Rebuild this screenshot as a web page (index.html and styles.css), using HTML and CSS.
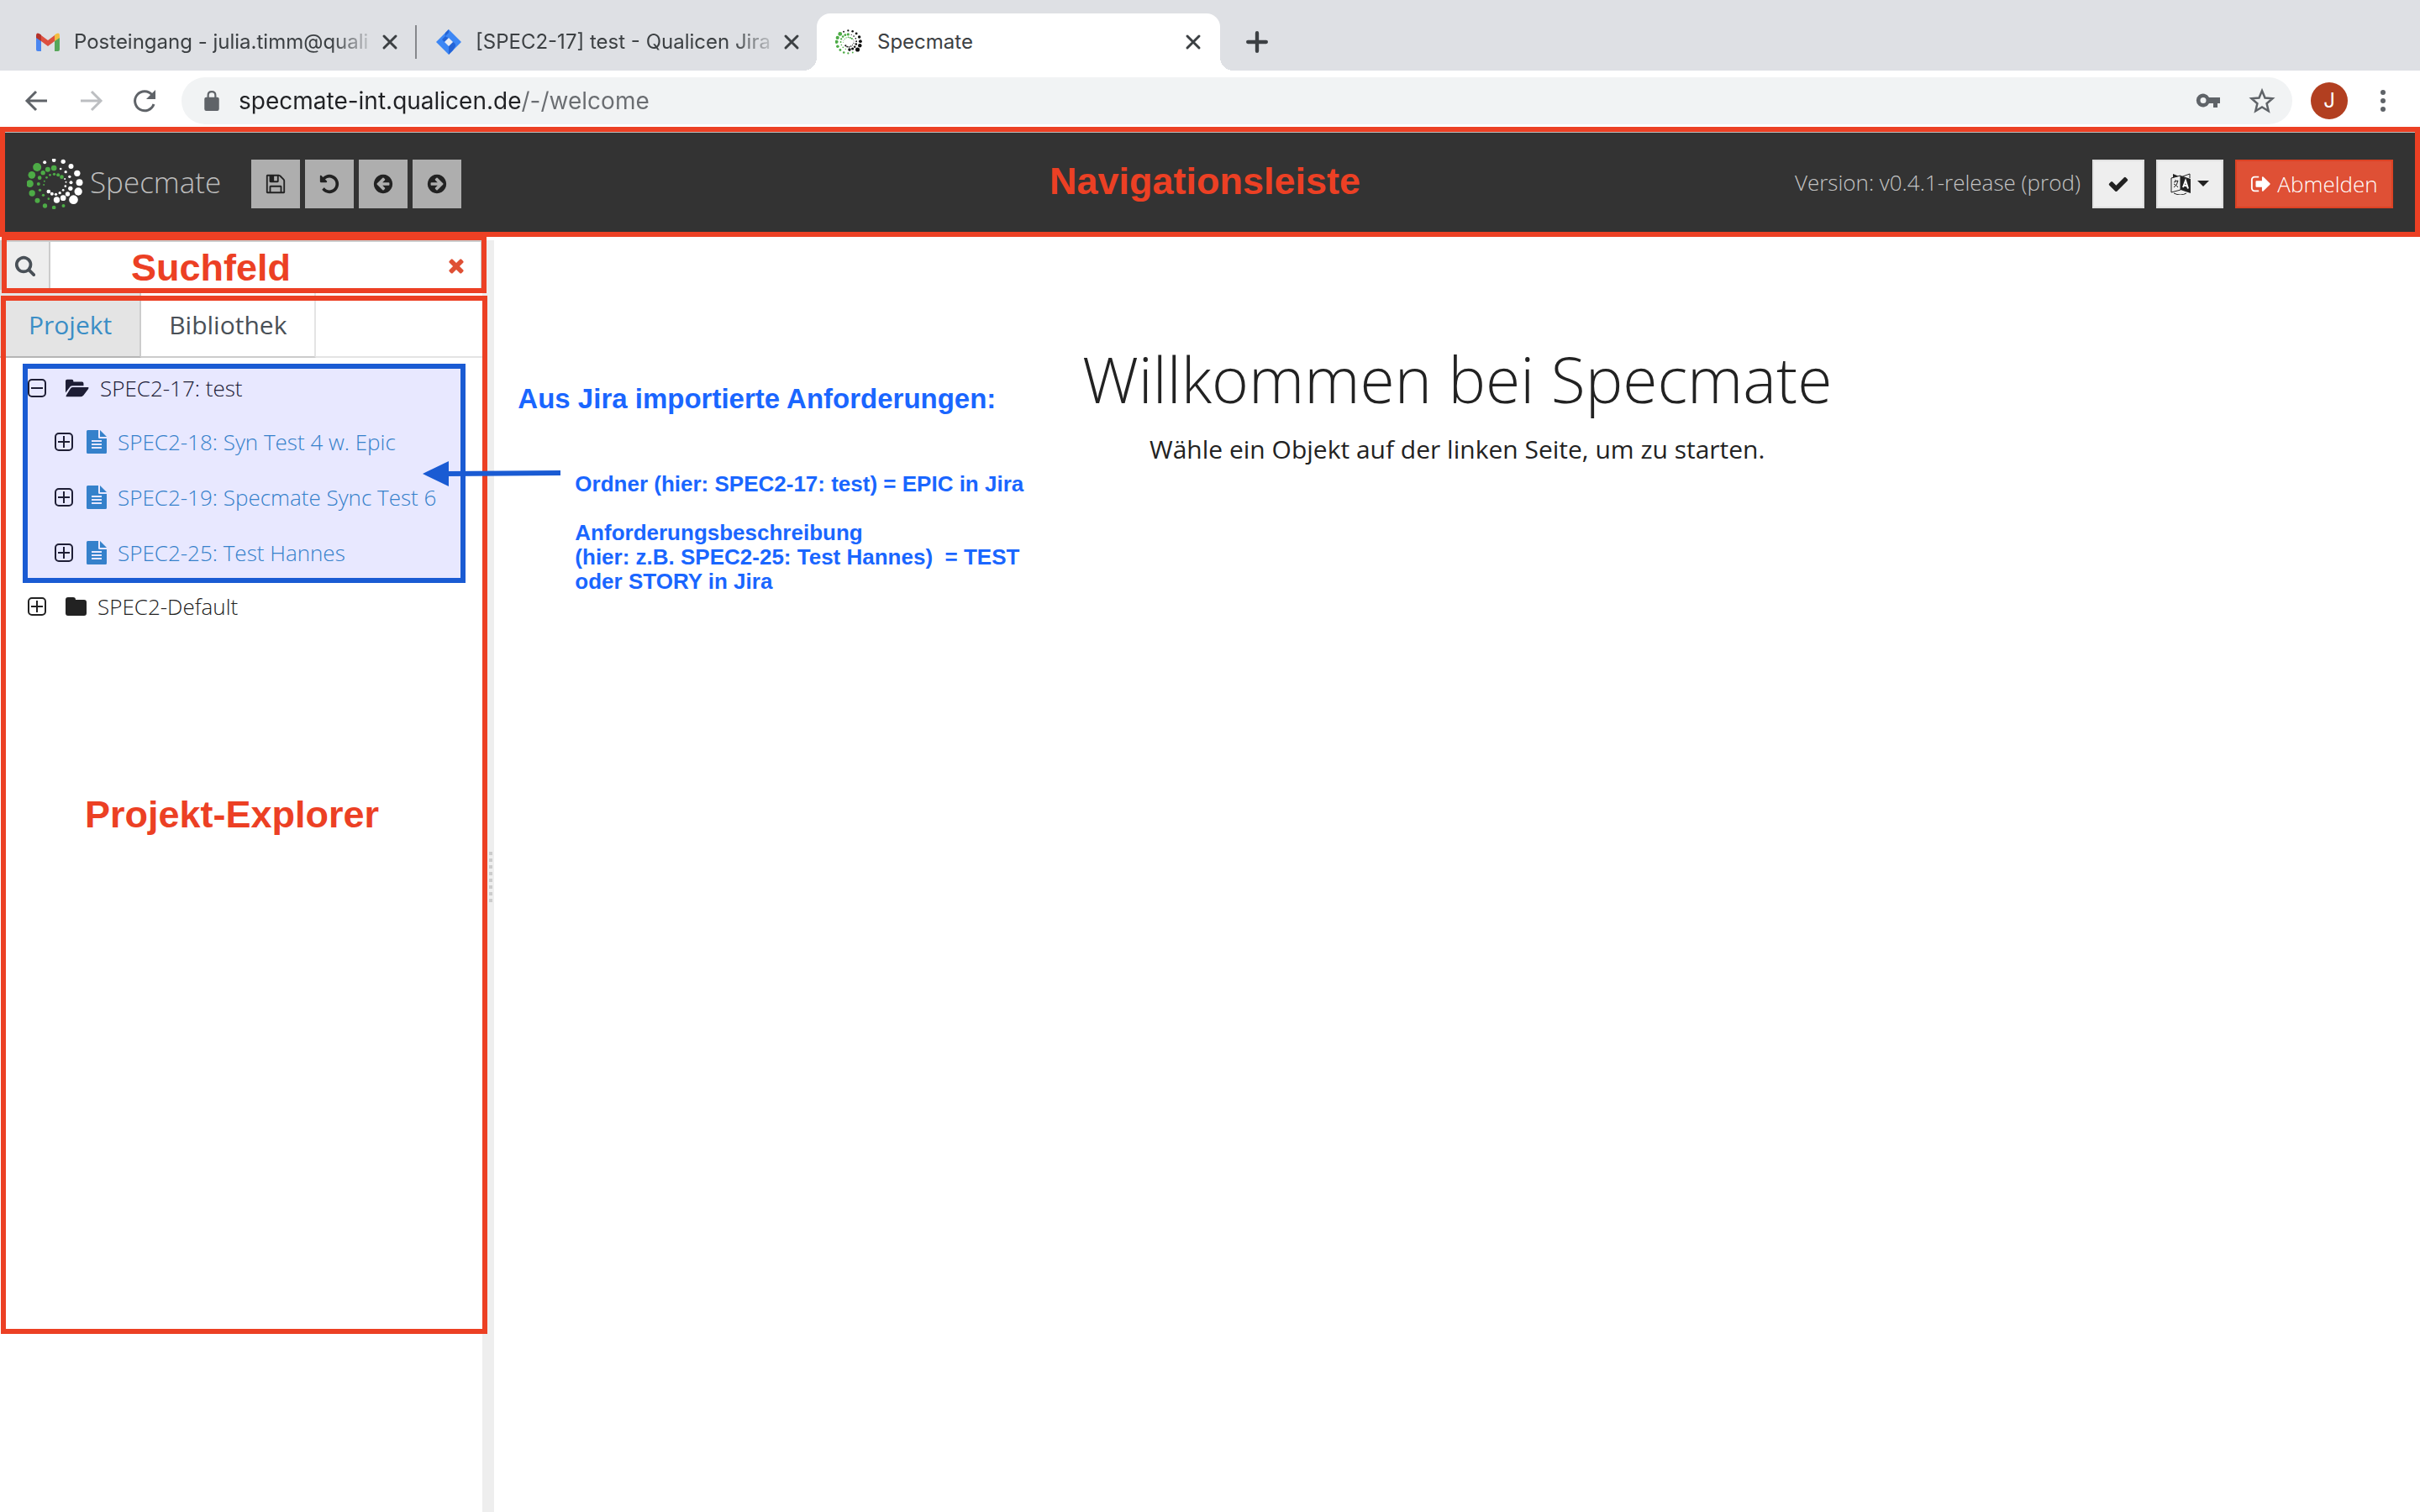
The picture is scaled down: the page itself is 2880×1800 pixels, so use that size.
FILE: index.html
```html
<!DOCTYPE html>
<html lang="de">
<head>
<meta charset="utf-8">
<title>Specmate</title>
<link rel="stylesheet" href="styles.css">
</head>
<body>
<svg class="defs" aria-hidden="true">
  <symbol id="ring" viewBox="36 30 200 180">
    <g fill="#4dab46">
      <circle cx="72" cy="60" r="15"/><circle cx="53" cy="88" r="13"/><circle cx="46" cy="119" r="13"/><circle cx="54" cy="153" r="11"/><circle cx="73" cy="179" r="9"/><circle cx="100" cy="198" r="8"/><circle cx="132" cy="204" r="7"/><circle cx="166" cy="198" r="6"/>
      <circle cx="132" cy="63" r="10"/><circle cx="110" cy="68" r="9"/><circle cx="93" cy="80" r="8"/><circle cx="81" cy="98" r="7"/><circle cx="77" cy="120" r="6"/><circle cx="82" cy="142" r="5"/><circle cx="94" cy="160" r="5"/><circle cx="113" cy="173" r="4"/>
      <circle cx="160" cy="95" r="7"/><circle cx="147" cy="88" r="6"/><circle cx="133" cy="85" r="5"/><circle cx="118" cy="88" r="4"/><circle cx="106" cy="97" r="4"/><circle cx="98" cy="110" r="3"/><circle cx="96" cy="123" r="3"/>
    </g>
    <g fill="currentColor">
      <circle cx="99" cy="43" r="6"/><circle cx="132" cy="35" r="7"/><circle cx="165" cy="40" r="8"/><circle cx="193" cy="57" r="9"/><circle cx="215" cy="82" r="11"/><circle cx="223" cy="115" r="12"/><circle cx="219" cy="147" r="14"/><circle cx="202" cy="176" r="16"/>
      <circle cx="156" cy="66" r="4"/><circle cx="174" cy="77" r="5"/><circle cx="188" cy="94" r="5"/><circle cx="193" cy="115" r="6"/><circle cx="191" cy="136" r="8"/><circle cx="181" cy="156" r="8"/><circle cx="165" cy="170" r="10"/><circle cx="142" cy="177" r="11"/>
      <circle cx="113" cy="147" r="7"/><circle cx="125" cy="155" r="6"/><circle cx="139" cy="157" r="5"/><circle cx="153" cy="152" r="5"/><circle cx="165" cy="142" r="4"/><circle cx="173" cy="128" r="4"/><circle cx="175" cy="113" r="3"/><circle cx="171" cy="102" r="3"/>
    </g>
  </symbol>
  <symbol id="close" viewBox="0 0 20 20"><path d="M3 3l14 14M17 3L3 17" fill="none" stroke="currentColor" stroke-width="3" stroke-linecap="round"/></symbol>
  <symbol id="arrow-circle" viewBox="0 0 1792 1792"><path d="M1408 960v-128q0-26-19-45t-45-19h-502l189-189q19-19 19-45t-19-45l-91-91q-18-18-45-18t-45 18l-362 362-91 91q-18 18-18 45t18 45l91 91 362 362q18 18 45 18t45-18l91-91q18-18 18-45t-18-45l-189-189h502q26 0 45-19t19-45zm256-64q0 209-103 385.500t-279.500 279.500-385.500 103-385.500-103-279.500-279.500-103-385.500 103-385.500 279.500-279.500 385.500-103 385.500 103 279.500 279.500 103 385.500z"/></symbol>
  <symbol id="plus-box" viewBox="0 0 22 22"><rect x="1" y="1" width="20" height="20" rx="4" fill="none" stroke="currentColor" stroke-width="2"/><path d="M4 11h14M11 4v14" stroke="currentColor" stroke-width="2"/></symbol>
  <symbol id="minus-box" viewBox="0 0 22 22"><rect x="1" y="1" width="20" height="20" rx="4" fill="none" stroke="currentColor" stroke-width="2"/><path d="M4 11h14" stroke="currentColor" stroke-width="2"/></symbol>
  <symbol id="file" viewBox="0 0 24 28"><path d="M1.500 0H14v8.500q0 1.500 1.500 1.500H24v16.500q0 1.500-1.500 1.500h-21Q0 28 0 26.500v-25Q0 0 1.500 0zM16 0l8 8h-8zM6 12v2h12v-2zM6 16v2h12v-2zM6 20v2h12v-2z" fill="currentColor" fill-rule="evenodd"/></symbol>
</svg>

<header class="browser">
  <div class="tabstrip">
    <div class="btab btab-mail">
      <svg class="fav" viewBox="0 0 28 22"><path d="M0 4v16q0 2 2 2h4V9z" fill="#4a86f0"/><path d="M28 4v16q0 2-2 2h-4V9z" fill="#57a75a"/><path d="M6 3l8 6 8-6v7l-8 6-8-6z" fill="#dd5040"/><path d="M22 2.500Q28-2 28 4v2l-6 4z" fill="#f2bd42"/><path d="M6 2.500Q0-2 0 4v2l6 4z" fill="#b5332a"/></svg>
      <span class="btab-title">Posteingang - julia.timm@quali</span>
      <button class="btab-close" aria-label="Tab schließen"><svg><use href="#close"/></svg></button>
    </div>
    <div class="btab btab-jira">
      <svg class="fav" viewBox="0 0 30 30"><path d="M15 0l15 15-15 15L0 15z" fill="#3d87f5"/><path d="M15 0l-4 4q-2 5 4 6l-5 5L7 12l8-8z" fill="#2363d6"/><path d="M20 15q6 2 0 10l-5 5v-10z" fill="#2363d6"/><path d="M15 10l5 5-5 5-5-5z" fill="#e8ebf2"/></svg>
      <span class="btab-title">[SPEC2-17] test - Qualicen Jira</span>
      <button class="btab-close" aria-label="Tab schließen"><svg><use href="#close"/></svg></button>
    </div>
    <div class="btab btab-active">
      <svg class="fav"><use href="#ring"/></svg>
      <span class="btab-title">Specmate</span>
      <button class="btab-close" aria-label="Tab schließen"><svg><use href="#close"/></svg></button>
    </div>
    <button class="newtab" aria-label="Neuer Tab"><svg viewBox="0 0 24 24"><path d="M12 2v20M2 12h20" stroke="#3c4043" stroke-width="4" stroke-linecap="round"/></svg></button>
  </div>
  <div class="toolbar">
    <button class="tool" aria-label="Zurück"><svg viewBox="0 0 32 32"><path d="M28 16H5M15 5L4 16l11 11" fill="none" stroke="#5f6368" stroke-width="3"/></svg></button>
    <button class="tool" aria-label="Vorwärts"><svg viewBox="0 0 32 32"><path d="M4 16h23M17 5l11 11-11 11" fill="none" stroke="#bcbec1" stroke-width="3"/></svg></button>
    <button class="tool" aria-label="Neu laden"><svg viewBox="0 0 32 32"><path d="M27 20A11.500 11.500 0 1 1 25 9" fill="none" stroke="#5f6368" stroke-width="3"/><path d="M29 3v11H18z" fill="#5f6368"/></svg></button>
    <div class="omnibox">
      <svg class="lock" viewBox="0 0 16 22"><rect y="7" width="16" height="15" rx="2" fill="#5f6368"/><path d="M4 8V5q0-4 4-4t4 4v3" fill="none" stroke="#5f6368" stroke-width="2"/></svg>
      <input class="url" type="text" aria-label="Adresse" value="specmate-int.qualicen.de/-/welcome">
      <button class="tool" aria-label="Passwort"><svg viewBox="0 0 32 32"><path d="M17 12A8 8 0 1 0 17 19h5v5h5v-5h3v-7zM10 19a3.500 3.500 0 1 1 0-7 3.500 3.500 0 0 1 0 7z" fill="#5f6368" fill-rule="evenodd"/></svg></button>
      <button class="tool" aria-label="Lesezeichen"><svg viewBox="0 0 32 32"><path d="M16 4l3.500 8.500 9 .8-6.900 6 2.100 8.900L16 23.500l-7.700 4.700 2.100-8.900-6.900-6 9-.8z" fill="none" stroke="#5f6368" stroke-width="2.500"/></svg></button>
    </div>
    <button class="avatar">J</button>
    <button class="tool" aria-label="Menü"><svg viewBox="0 0 32 32"><g fill="#5f6368"><circle cx="16" cy="6" r="3"/><circle cx="16" cy="16" r="3"/><circle cx="16" cy="26" r="3"/></g></svg></button>
  </div>
</header>

<nav class="navbar">
  <a class="brand" href="#"><svg class="brand-ring"><use href="#ring"/></svg><span>Specmate</span></a>
  <div class="actions">
    <button class="act" aria-label="Speichern"><svg class="fa" viewBox="0 0 1792 1792"><path d="M512 1536h768v-384h-768v384zm896 0h128v-896q0-14-10-38.500t-20-34.500l-281-281q-10-10-34-20t-39-10v416q0 40-28 68t-68 28h-576q-40 0-68-28t-28-68v-416h-128v1280h128v-416q0-40 28-68t68-28h832q40 0 68 28t28 68v416zm-384-928v-320q0-13-9.500-22.500t-22.500-9.500h-192q-13 0-22.500 9.500t-9.500 22.500v320q0 13 9.500 22.500t22.500 9.500h192q13 0 22.500-9.500t9.500-22.500zm640 32v928q0 40-28 68t-68 28h-1344q-40 0-68-28t-28-68v-1344q0-40 28-68t68-28h928q40 0 88 20t76 48l280 280q28 28 48 76t20 88z"/></svg></button>
    <button class="act" aria-label="Rückgängig"><svg class="fa" viewBox="0 0 1792 1792"><path d="M1664 896q0 156-61 298t-164 245-245 164-298 61q-172 0-327-72.500t-264-204.500q-7-10-6.500-22.500t8.500-20.500l137-138q10-9 25-9 16 2 23 12 73 95 179 147t225 52q104 0 198.500-40.500t163.500-109.500 109.500-163.500 40.500-198.500-40.500-198.500-109.500-163.500-163.500-109.500-198.500-40.500q-98 0-188 35.500t-160 101.500l137 138q31 30 14 69-17 40-59 40h-448q-26 0-45-19t-19-45v-448q0-42 40-59 39-17 69 14l130 129q107-101 244.500-156.500t284.500-55.500q156 0 298 61t245 164 164 245 61 298z"/></svg></button>
    <button class="act" aria-label="Zurück"><svg class="fa"><use href="#arrow-circle"/></svg></button>
    <button class="act" aria-label="Vor"><svg class="fa flip"><use href="#arrow-circle"/></svg></button>
  </div>
  <span class="version">Version: v0.4.1-release (prod)</span>
  <button class="light check" aria-label="Bestätigen"><svg class="fa" viewBox="0 0 1792 1792"><path d="M1671 566q0 40-28 68l-724 724-136 136q-28 28-68 28t-68-28l-136-136-362-362q-28-28-28-68t28-68l136-136q28-28 68-28t68 28l294 295 656-657q28-28 68-28t68 28l136 136q28 28 28 68z"/></svg></button>
  <button class="light lang" aria-label="Sprache">
    <svg class="fa" viewBox="0 0 26 26"><path d="M3 1l10 4v5L3 7z"/><path d="M12 5l11-4v5" fill="none" stroke="#222"/><path d="M1 6l11-3v17L1 23z" fill="#eee" stroke="#222"/><path d="M12 3l12 4v17l-12-4z"/><path d="M4 11l5-2q-1 6-5 8M4 13q3 1 5 4M6 8v2" fill="none" stroke="#222"/><path d="M15 17l3-8 3 9.500M16 14.500l4 1" fill="none" stroke="#fff" stroke-width="2"/><path d="M4 24q8 4 15 0" fill="none" stroke="#222"/></svg>
    <svg class="caret" viewBox="0 0 14 8"><path d="M0 0h14L7 7z"/></svg>
  </button>
  <button class="logout"><svg class="fa" viewBox="0 0 1792 1792"><path d="M704 1440q0 4 1 20t.5 26.500-3 23.500-10 19.500-20.500 6.500h-320q-119 0-203.500-84.500t-84.500-203.500v-704q0-119 84.500-203.500t203.500-84.500h320q13 0 22.500 9.500t9.500 22.500q0 4 1 20t.5 26.500-3 23.500-10 19.500-20.500 6.500h-320q-66 0-113 47t-47 113v704q0 66 47 113t113 47h312l11.500 1 11.500 3 8 5.500 7 9 2 13.500zm928-544q0 26-19 45l-544 544q-19 19-45 19t-45-19-19-45v-288h-448q-26 0-45-19t-19-45v-384q0-26 19-45t45-19h448v-288q0-26 19-45t45-19 45 19l544 544q19 19 19 45z"/></svg><span>Abmelden</span></button>
  <div class="frame frame-nav"></div>
  <strong class="label label-nav">Navigationsleiste</strong>
</nav>

<div class="workspace">
  <aside class="sidebar">
    <div class="search">
      <span class="search-icon"><svg class="fa" viewBox="0 0 1792 1792"><path d="M1216 832q0-185-131.500-316.500t-316.500-131.500-316.500 131.500-131.500 316.500 131.500 316.500 316.500 131.500 316.500-131.500 131.500-316.500zm512 832q0 52-38 90t-90 38q-54 0-90-38l-343-342q-179 124-399 124-143 0-273.500-55.500t-225-150-150-225-55.500-273.500 55.500-273.500 150-225 225-150 273.500-55.500 273.500 55.500 225 150 150 225 55.500 273.500q0 220-124 399l343 343q37 37 37 90z"/></svg></span>
      <input class="search-input" type="text" aria-label="Suche">
      <button class="clear" aria-label="Leeren"><svg class="fa" viewBox="0 0 1792 1792"><path d="M1490 1322q0 40-28 68l-136 136q-28 28-68 28t-68-28l-294-294-294 294q-28 28-68 28t-68-28l-136-136q-28-28-28-68t28-68l294-294-294-294q-28-28-28-68t28-68l136-136q28-28 68-28t68 28l294 294 294-294q28-28 68-28t68 28l136 136q28 28 28 68t-28 68l-294 294 294 294q28 28 28 68z"/></svg></button>
      <div class="frame frame-search"></div>
      <strong class="label label-search">Suchfeld</strong>
    </div>
    <div class="explorer">
      <div class="tabs">
        <a class="tab tab-on" href="#">Projekt</a>
        <a class="tab" href="#">Bibliothek</a>
      </div>
      <ul class="tree">
        <li>
          <div class="row"><button class="toggle" aria-label="Zuklappen"><svg><use href="#minus-box"/></svg></button><svg class="folder folder-open" viewBox="0 0 30 22"><path d="M0 2Q0 0 2 0h6q2 0 2 2v1h11q2 0 2 2v3H9Q7 8 6 9L0 17z"/><path d="M9 10h20q1 .500 0 2l-6 8q-2 2-4 2H1q-1-.500 0-2l5-8q1-2 3-2z"/></svg><span>SPEC2-17: test</span></div>
          <ul class="leaves">
            <li class="row leaf"><button class="toggle" aria-label="Aufklappen"><svg><use href="#plus-box"/></svg></button><a href="#"><svg class="file"><use href="#file"/></svg>SPEC2-18: Syn Test 4 w. Epic</a></li>
            <li class="row leaf"><button class="toggle" aria-label="Aufklappen"><svg><use href="#plus-box"/></svg></button><a href="#"><svg class="file"><use href="#file"/></svg>SPEC2-19: Specmate Sync Test 6</a></li>
            <li class="row leaf"><button class="toggle" aria-label="Aufklappen"><svg><use href="#plus-box"/></svg></button><a href="#"><svg class="file"><use href="#file"/></svg>SPEC2-25: Test Hannes</a></li>
          </ul>
        </li>
        <li class="row"><button class="toggle" aria-label="Aufklappen"><svg><use href="#plus-box"/></svg></button><svg class="folder" viewBox="0 0 25 22"><path d="M0 3Q0 0 3 0h6q3 0 3 3h10q3 0 3 3v13q0 3-3 3H3q-3 0-3-3z"/></svg><span>SPEC2-Default</span></li>
      </ul>
      <div class="frame frame-explorer"></div>
      <div class="frame frame-import"></div>
      <strong class="label label-explorer">Projekt-Explorer</strong>
    </div>
  </aside>
  <div class="splitter"><span class="grip"></span></div>
  <main class="welcome">
    <h1>Willkommen bei Specmate</h1>
    <p>Wähle ein Objekt auf der linken Seite, um zu starten.</p>
    <svg class="arrow" viewBox="0 0 164 30"><path d="M30 12l134-1v6l-134 1z"/><path d="M0 15L31 0v30z"/></svg>
    <div class="note">
      <strong class="note-title">Aus Jira importierte Anforderungen:</strong>
      <div class="note-body">Ordner (hier: SPEC2-17: test) = EPIC in Jira

Anforderungsbeschreibung
(hier: z.B. SPEC2-25: Test Hannes)  = TEST
oder STORY in Jira</div>
    </div>
  </main>
</div>
</body>
</html>
```
FILE: styles.css
```css
* { box-sizing: border-box; }
body {
  margin: 0;
  min-height: 100vh;
  display: flex;
  flex-direction: column;
  background: #fff;
  color: #222;
  font: 300 26px/40px "Open Sans", sans-serif;
}
button, input { font: inherit; color: inherit; border: 0; padding: 0; margin: 0; background: none; border-radius: 0; }
button { display: flex; align-items: center; justify-content: center; flex: none; }
svg { display: block; flex: none; }
ul { list-style: none; margin: 0; padding: 0; }
a { color: #3b8ec6; text-decoration: none; }
.defs { position: absolute; width: 0; height: 0; }

/* Browser chrome */
.browser { font: 400 24px/32px Inter, sans-serif; color: #3c4043; }
.tabstrip { display: flex; align-items: flex-end; height: 84px; padding-left: 16px; background: #dee0e4; }
.btab { position: relative; display: flex; align-items: center; height: 68px; padding: 0 22px; }
.btab-mail { width: 480px; padding-left: 26px; }
.btab-jira { width: 476px; padding-right: 20px; }
.btab-mail::after { content: ""; position: absolute; right: 0; width: 2px; height: 40px; background: #86888c; }
.btab-active { width: 480px; background: #fff; border-radius: 16px 16px 0 0; }
.btab-active::before, .btab-active::after {
  content: ""; position: absolute; bottom: 0; left: -16px; width: 16px; height: 16px;
  background: radial-gradient(circle at 0 0, transparent 16px, #fff 16px);
}
.btab-active::after { left: auto; right: -16px; background: radial-gradient(circle at 100% 0, transparent 16px, #fff 16px); }
.fav { width: 32px; height: 30px; margin-right: 16px; color: #111; }
.btab-mail .fav { width: 30px; height: 22px; }
.btab-active .fav { margin-right: 18px; }
.btab-title { flex: 1; white-space: nowrap; }
.btab-mail .btab-title, .btab-jira .btab-title { mask-image: linear-gradient(to left, transparent 4px, #000 60px); }
.btab-close svg { width: 20px; height: 20px; }
.newtab { width: 88px; height: 68px; }
.newtab svg { width: 26px; height: 26px; }
.toolbar { display: flex; align-items: center; height: 67px; padding: 0 20px 0 12px; }
.tool { width: 64px; height: 56px; }
.tool svg { width: 32px; height: 32px; }
.omnibox { flex: 1; display: flex; align-items: center; height: 56px; margin: 4px 22px 0 12px; padding: 0 4px 0 27px; background: #f1f3f4; border-radius: 28px; }
.toolbar > .tool, .avatar { margin-top: 4px; }
.lock { width: 18px; height: 24px; margin-right: 23px; }
.url {
  flex: 1; min-width: 0; height: 56px; font-size: 28px; outline: 0;
  background: linear-gradient(to right, #202124 336px, #6a6d71 336px);
  -webkit-background-clip: text; background-clip: text; color: transparent;
}
.avatar { width: 44px; height: 44px; margin-right: 10px; border-radius: 50%; background: #b23f20; color: #fff; }
.toolbar > .tool:last-child { margin-right: -8px; }

/* Navigation bar */
.navbar { position: relative; display: flex; align-items: center; height: 131px; padding: 4px 32px 0; background: #333; }
.brand { display: flex; align-items: center; height: 60px; margin-right: 36px; color: #bdbdbd; font-size: 35px; }
.brand-ring { width: 67px; height: 60px; margin-right: 8px; color: #fff; }
.brand span { padding-bottom: 4px; }
.actions { display: flex; gap: 6px; margin-right: auto; }
.act { width: 58px; height: 58px; background: #aeaeae; }
.fa { width: 26px; height: 26px; fill: currentColor; }
.flip { transform: scaleX(-1); }
.version { margin-right: 14px; padding-bottom: 4px; color: #c4c4c4; }
.light { height: 58px; margin-right: 14px; background: #eee; border: 2px solid #e0e0e0; }
.check { width: 62px; }
.lang { width: 80px; gap: 6px; }
.caret { width: 14px; height: 8px; fill: currentColor; }
.logout { width: 188px; height: 58px; gap: 6px; background: #df5035; border: 2px solid #dc4224; color: #fff; }

/* Callout frames and captions */
.frame { position: absolute; border: 6px solid #ec4024; pointer-events: none; z-index: 1; }
.label { position: absolute; color: #ec4024; font: 700 45px/52px "Liberation Sans", Arial, sans-serif; white-space: nowrap; z-index: 1; }
.frame-nav { inset: 0; box-shadow: inset 0 1px #bbb; }
.label-nav { left: 1249px; top: 39px; }

/* Workspace */
.workspace { flex: 1; display: grid; grid-template-columns: minmax(0, 100fr) 14px minmax(0, 399fr); padding-top: 4px; }
.search { position: relative; display: flex; height: 59px; border: 2px solid #ccc; }
.search-icon { display: flex; align-items: center; justify-content: center; width: 58px; background: #eee; border-right: 2px solid #ccc; color: #495057; }
.search-input { flex: 1; min-width: 0; outline: 0; }
.clear { width: 58px; color: #df5035; }
.frame-search { inset: -8px -7px -6px 0; }
.label-search { left: 154px; top: 5px; }
.explorer { position: relative; }
.tabs { display: flex; height: 81px; border-bottom: 2px solid #e4e4e4; font: 400 30px/40px "Open Sans", sans-serif; }
.tab { height: 81px; padding: 22px 33px 0; border-right: 2px solid #e4e4e4; border-bottom: 2px solid #ccc; color: #495057; }
.tab-on { padding-left: 34px; background: #e4e4e4; border-color: #ccc; border-bottom-color: #b5b5b5; color: #3b8ec6; }
.tree { padding: 5px 0 0 33px; }
.row { display: flex; align-items: center; height: 62px; white-space: nowrap; }
.toggle svg { width: 22px; height: 22px; }
.folder { width: 25px; height: 22px; margin: 0 13px 0 23px; fill: currentColor; }
.folder-open { width: 28px; }
.leaves { padding-left: 32px; }
.leaf { height: 66px; }
.leaf a { display: flex; align-items: center; margin-left: 16px; }
.file { width: 24px; height: 28px; margin-right: 13px; }
.frame-explorer { left: 1px; right: -6px; top: 7px; height: 1236px; }
.frame-import { left: 27px; right: 20px; top: 88px; height: 261px; border-color: #1a5bd3; background: rgba(0, 0, 255, .09); }
.label-explorer { left: 101px; top: 599px; }

.splitter { display: flex; align-items: flex-start; justify-content: flex-end; padding: 728px 2px 0 0; background: #eee; }
.grip { width: 4px; height: 60px; background: repeating-linear-gradient(#ccc 0 4px, transparent 4px 8px); }

.welcome { position: relative; padding-top: 109px; text-align: center; }
h1 { margin: 0 0 8px; font-size: 75px; line-height: 112px; font-weight: 300; }
p { margin: 0; font-size: 30px; font-weight: 400; }
.arrow { position: absolute; left: -85px; top: 263px; width: 164px; height: 30px; fill: #1a5bd3; z-index: 2; }
.note { position: absolute; left: 28px; top: 170px; text-align: left; color: #1a66ff; font: 700 26px/29px "Liberation Sans", Arial, sans-serif; }
.note-title { display: block; font-size: 33px; line-height: 38px; }
.note-body { margin: 68px 0 0 68px; white-space: pre; }
```
